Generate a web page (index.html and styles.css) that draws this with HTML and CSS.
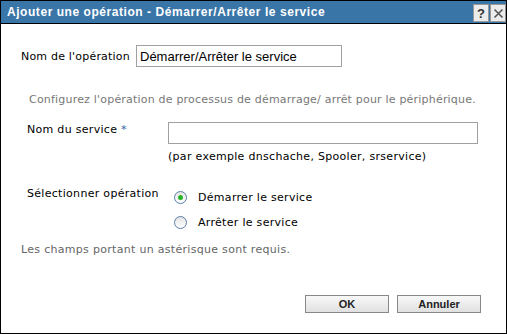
FILE: index.html
```html
<!DOCTYPE html>
<html lang="fr">
<head>
    <meta charset="UTF-8">
    <title>Ajouter une opération</title>
    <link rel="stylesheet" href="styles.css">
</head>
<body>
    <div class="dialog">
        <div class="titlebar">
            <span class="title">Ajouter une opération - Démarrer/Arrêter le service</span>
            <div class="title-btns">
                <span class="tbtn">?</span>
                <span class="tbtn">
                    <svg width="11" height="11" viewBox="0 0 11 11"><path d="M1.5 1.5l8 8M9.5 1.5l-8 8" stroke="#555" stroke-width="1.6"/></svg>
                </span>
            </div>
        </div>

        <div class="content">
            <div class="row op-row">
                <label class="lbl">Nom de l'opération</label>
                <input class="txt op-input" type="text" value="Démarrer/Arrêter le service">
            </div>

            <p class="hint">Configurez l'opération de processus de démarrage/ arrêt pour le périphérique.</p>

            <div class="row svc-row">
                <label class="lbl lbl-wide">Nom du service <span class="req">*</span></label>
                <div class="field">
                    <input class="txt svc-input" type="text">
                    <div class="example">(par exemple dnschache, Spooler, srservice)</div>
                </div>
            </div>

            <div class="row radio-row">
                <label class="lbl lbl-wide">Sélectionner opération</label>
                <div class="radios">
                    <div class="radio"><span class="dot checked"></span>Démarrer le service</div>
                    <div class="radio"><span class="dot"></span>Arrêter le service</div>
                </div>
            </div>

            <p class="required">Les champs portant un astérisque sont requis.</p>

            <div class="actions">
                <button class="btn">OK</button>
                <button class="btn">Annuler</button>
            </div>
        </div>
    </div>
</body>
</html>
```

FILE: styles.css
```css
body {
    margin: 0;
    background: #ffffff;
}

.dialog {
    width: 505px;
    height: 332px;
    border: 1px solid #000;
    background: #fff;
    font-family: 'DejaVu Sans', sans-serif;
    font-size: 11px;
    letter-spacing: 0.3px;
    color: #000;
}

.titlebar {
    height: 22px;
    background: #3a75a8;
    border-bottom: 1px solid #000;
    display: flex;
    align-items: center;
    justify-content: space-between;
    padding: 0 0 0 6px;
}

.title {
    color: #fff;
    font-family: 'Liberation Sans', Arial, sans-serif;
    font-weight: bold;
    font-size: 12px;
    letter-spacing: 0.55px;
}

.title-btns {
    display: flex;
    gap: 1px;
    align-self: flex-start;
    margin-top: 3px;
}

.tbtn {
    width: 14px;
    height: 16px;
    background: #ececec;
    border: 1px solid #999;
    display: flex;
    align-items: center;
    justify-content: center;
    font-family: 'Liberation Sans', Arial, sans-serif;
    font-weight: bold;
    font-size: 13px;
    letter-spacing: 0;
    color: #333;
}

.content {
    padding: 0 0 0 20px;
}

.row {
    display: flex;
}

.op-row {
    margin-top: 21px;
    align-items: center;
}

.lbl {
    width: 115px;
    letter-spacing: 0.2px;
}

.lbl-wide {
    width: 141px;
    padding-left: 6px;
    letter-spacing: 0.3px;
}

.txt {
    border: 1px solid #a0a0a0;
    font-family: 'Liberation Sans', Arial, sans-serif;
    font-size: 13px;
    letter-spacing: 0;
    padding: 0 3px;
    margin: 0;
    box-sizing: border-box;
    height: 22px;
}

.op-input {
    width: 206px;
}

.hint {
    margin: 26px 0 0 8px;
    color: #777;
    letter-spacing: 0.2px;
}

.svc-row {
    margin-top: 16px;
}

.svc-row .lbl {
    padding-top: 1px;
}

.req {
    color: #2c5ea0;
}

.svc-input {
    width: 310px;
}

.example {
    margin-top: 6px;
}

.radio-row {
    margin-top: 24px;
}

.radios {
    display: flex;
    flex-direction: column;
    gap: 12px;
    padding-top: 4px;
}

.radio {
    display: flex;
    align-items: center;
    padding-left: 6px;
}

.dot {
    width: 11px;
    height: 11px;
    border: 1px solid #5a7fa8;
    border-radius: 50%;
    background: linear-gradient(#e4e4e4, #fff);
    margin-right: 11px;
    display: flex;
    align-items: center;
    justify-content: center;
}

.dot.checked::after {
    content: "";
    width: 5px;
    height: 5px;
    border-radius: 50%;
    background: #28b428;
}

.required {
    margin: 14px 0 0 0;
    color: #666;
}

.actions {
    display: flex;
    justify-content: flex-end;
    gap: 8px;
    margin-top: 39px;
    padding-right: 25px;
}

.btn {
    width: 84px;
    height: 18px;
    padding: 0;
    border: 1px solid #888;
    background: linear-gradient(#f8f8f8, #e0e0e0);
    font-family: 'Liberation Sans', Arial, sans-serif;
    font-weight: bold;
    font-size: 11px;
    letter-spacing: 0;
    color: #222;
}
```
